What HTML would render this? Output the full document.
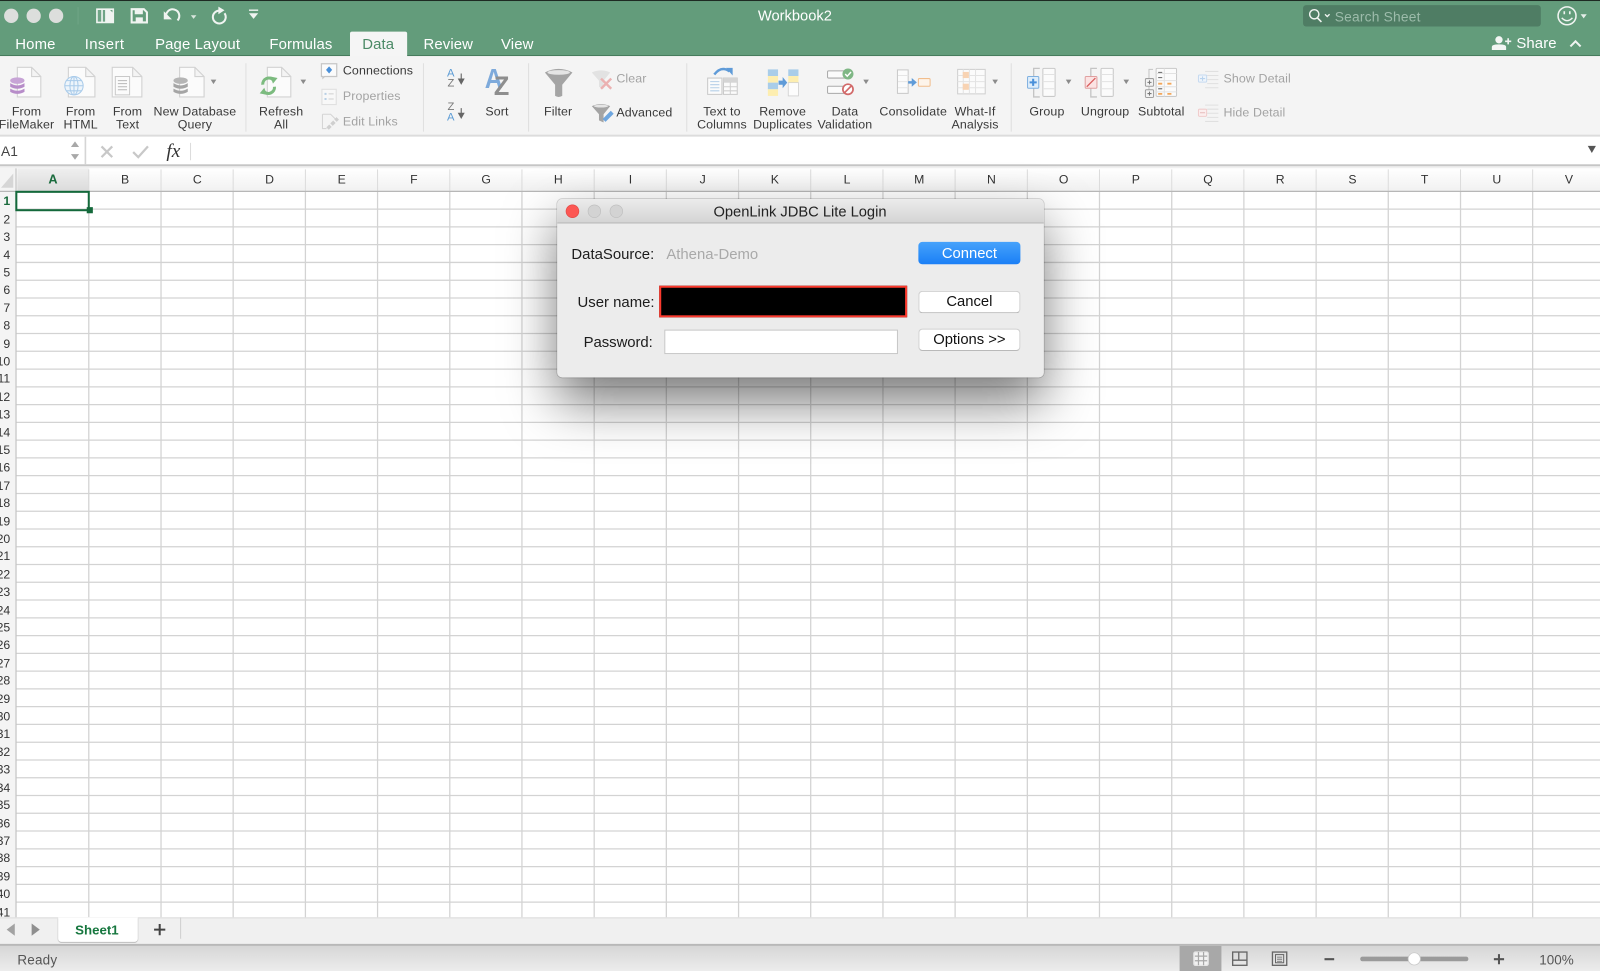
<!DOCTYPE html>
<html><head><meta charset="utf-8"><title>Workbook2</title>
<style>
html,body{margin:0;padding:0;width:1600px;height:971px;overflow:hidden;background:#fff}
#s{position:absolute;left:0;top:0;width:1568px;height:952px;transform:scale(1.020408);transform-origin:0 0;overflow:hidden;font-family:"Liberation Sans",sans-serif;color:#333;filter:blur(.3px)}
.b{position:absolute}
.t{position:absolute;white-space:nowrap}
.c{transform:translateX(-50%);text-align:center}
.r{font-size:12.15px;line-height:13px;letter-spacing:.12px;color:#3a3a3a}
.g{color:#a3a3a3}
.tab{font-size:14.6px;color:#fff;top:35px;line-height:18px;letter-spacing:.12px}
#hdr{position:absolute;left:16.5px;top:164px;height:24px;display:flex;font-size:12px;line-height:25px;color:#333}
#hdr div{width:70.75px;text-align:center;flex:none}
#rows{position:absolute;left:-10px;top:188.3px;width:20px;text-align:right;font-size:12px;color:#333}
#rows div{height:17.415px;line-height:19px}
svg{position:absolute;left:0;top:0}
.btn{position:absolute;left:900px;width:100px;background:#fff;border:1px solid #d0d0d0;border-bottom-color:#b9b9b9;border-radius:4px;box-sizing:border-box;text-align:center;font-size:14.5px;color:#111}
.lbl{position:absolute;white-space:nowrap;font-size:14.6px;color:#1c1c1c;line-height:18px}
</style></head><body>
<div id="s">
<!-- title / tabs -->
<div class="b" style="left:0;top:0;width:1568px;height:55px;background:#639c7b;border-top:1px solid #1d2a22;box-sizing:border-box;border-bottom:1px solid #44795a"></div>
<div class="b" style="left:1277px;top:5px;width:233px;height:21px;background:#4f7d64;border-radius:3px"></div>
<div class="t" style="left:1308px;top:8.5px;font-size:13.5px;line-height:16px;color:#9dbcab;letter-spacing:.2px">Search Sheet</div>
<div class="t c" style="left:779px;top:8px;font-size:14.4px;line-height:17px;color:#fff">Workbook2</div>
<div class="b" style="left:343px;top:31px;width:56px;height:25px;background:#f5f5f5;border-radius:2px 2px 0 0"></div>
<div class="t tab" style="left:15px">Home</div>
<div class="t tab" style="left:83px;letter-spacing:.4px">Insert</div>
<div class="t tab" style="left:152px">Page Layout</div>
<div class="t tab" style="left:264px">Formulas</div>
<div class="t tab" style="left:355px;color:#4b8a66">Data</div>
<div class="t tab" style="left:415px">Review</div>
<div class="t tab" style="left:491px">View</div>
<div class="t tab" style="left:1486px;top:34px">Share</div>
<!-- ribbon -->
<div class="b" style="left:0;top:55px;width:1568px;height:77px;background:#f4f4f4;border-bottom:2px solid #dcdcdc"></div>
<!-- formula bar -->
<div class="b" style="left:0;top:134px;width:1568px;height:27px;background:#fff;border-bottom:2px solid #c6c6c6"></div>
<div class="b" style="left:0;top:163px;width:1568px;height:2px;background:#f0f0f0"></div>
<div class="t" style="left:1px;top:141px;font-size:13.5px;line-height:16px;color:#444">A1</div>
<div class="t" style="left:163px;top:139px;font-family:'Liberation Serif',serif;font-style:italic;font-size:19px;line-height:20px;color:#333">fx</div>

<div class="t r c" style="left:26px;top:103px">From<br>FileMaker</div>
<div class="t r c" style="left:79px;top:103px">From<br>HTML</div>
<div class="t r c" style="left:125px;top:103px">From<br>Text</div>
<div class="t r c" style="left:191px;top:103px">New Database<br>Query</div>
<div class="t r c" style="left:275.5px;top:103px">Refresh<br>All</div>
<div class="t r" style="left:336px;top:63px">Connections</div>
<div class="t r g" style="left:336px;top:88px">Properties</div>
<div class="t r g" style="left:336px;top:113px">Edit Links</div>
<div class="t r c" style="left:487px;top:103px">Sort</div>
<div class="t r c" style="left:547px;top:103px">Filter</div>
<div class="t r g" style="left:604px;top:71px">Clear</div>
<div class="t r" style="left:604px;top:104px">Advanced</div>
<div class="t r c" style="left:707.5px;top:103px">Text to<br>Columns</div>
<div class="t r c" style="left:767px;top:103px">Remove<br>Duplicates</div>
<div class="t r c" style="left:828px;top:103px">Data<br>Validation</div>
<div class="t r c" style="left:895px;top:103px;letter-spacing:.2px">Consolidate</div>
<div class="t r c" style="left:955.5px;top:103px">What-If<br>Analysis</div>
<div class="t r c" style="left:1026px;top:103px">Group</div>
<div class="t r c" style="left:1083px;top:103px">Ungroup</div>
<div class="t r c" style="left:1138px;top:103px">Subtotal</div>
<div class="t r g" style="left:1199px;top:71px">Show Detail</div>
<div class="t r g" style="left:1199px;top:104px">Hide Detail</div>
<!-- Sort letters -->
<div class="t" style="left:438px;top:66px;font-size:11px;line-height:12px;color:#5b9bd5">A</div>
<div class="t" style="left:438.5px;top:76px;font-size:11px;line-height:12px;color:#777">Z</div>
<div class="t" style="left:438.5px;top:99px;font-size:11px;line-height:12px;color:#777">Z</div>
<div class="t" style="left:438px;top:109px;font-size:11px;line-height:12px;color:#5b9bd5">A</div>
<div class="t" style="left:474.5px;top:61px;font-size:27px;line-height:32px;color:#7eaadb;font-weight:bold;transform:scaleX(.9);transform-origin:0 0">A</div>
<div class="t" style="left:484px;top:69px;font-size:26px;line-height:31px;color:#8e8e8e;font-weight:bold;transform:scaleX(.95);transform-origin:0 0">Z</div>

<!-- sheet grid -->
<div class="b" style="left:16px;top:165px;width:1552px;height:23px;background:linear-gradient(#fff,#f0f0f0)"></div>
<div class="b" style="left:0;top:165px;width:16px;height:734px;background:#f4f4f4"></div>
<div class="b" style="left:16.5px;top:165px;width:70.5px;height:22.5px;background:linear-gradient(#efefef,#dadada)"></div>
<svg width="1568" height="952" viewBox="0 0 1568 952">
<path d="M13 170V184H1Z" fill="#d6d6d6"/>
<g stroke="#d3d3d3" stroke-width="1.25" fill="none">
<path d="M16 204.9H1568M16 222.3H1568M16 239.7H1568M16 257.2H1568M16 274.6H1568M16 292H1568M16 309.4H1568M16 326.8H1568M16 344.2H1568M16 361.7H1568M16 379.1H1568M16 396.5H1568M16 413.9H1568M16 431.3H1568M16 448.7H1568M16 466.1H1568M16 483.6H1568M16 501H1568M16 518.4H1568M16 535.8H1568M16 553.2H1568M16 570.6H1568M16 588H1568M16 605.5H1568M16 622.9H1568M16 640.3H1568M16 657.7H1568M16 675.1H1568M16 692.5H1568M16 709.9H1568M16 727.4H1568M16 744.8H1568M16 762.2H1568M16 779.6H1568M16 797H1568M16 814.4H1568M16 831.9H1568M16 849.3H1568M16 866.7H1568M16 884.1H1568"/>
<path d="M87 187V899M157.8 187V899M228.5 187V899M299.3 187V899M370 187V899M440.8 187V899M511.5 187V899M582.3 187V899M653 187V899M723.8 187V899M794.5 187V899M865.3 187V899M936 187V899M1006.8 187V899M1077.5 187V899M1148.3 187V899M1219 187V899M1289.8 187V899M1360.5 187V899M1431.3 187V899M1502 187V899"/>
</g>
<path d="M87 166V187M157.8 166V187M228.5 166V187M299.3 166V187M370 166V187M440.8 166V187M511.5 166V187M582.3 166V187M653 166V187M723.8 166V187M794.5 166V187M865.3 166V187M936 166V187M1006.8 166V187M1077.5 166V187M1148.3 166V187M1219 166V187M1289.8 166V187M1360.5 166V187M1431.3 166V187M1502 166V187" stroke="#dcdcdc"/>
<path d="M0 187.5H1568" stroke="#b7b7b7" stroke-width="1.2"/>
<path d="M15.7 165V899" stroke="#c4c4c4" stroke-width="1.2"/>
</svg>
<div id="hdr"><div style="font-weight:bold;color:#1a6b3d;font-size:12.5px">A</div><div>B</div><div>C</div><div>D</div><div>E</div><div>F</div><div>G</div><div>H</div><div>I</div><div>J</div><div>K</div><div>L</div><div>M</div><div>N</div><div>O</div><div>P</div><div>Q</div><div>R</div><div>S</div><div>T</div><div>U</div><div>V</div></div>
<div id="rows"><div style="font-weight:bold;color:#1a6b3d">1</div><div>2</div><div>3</div><div>4</div><div>5</div><div>6</div><div>7</div><div>8</div><div>9</div><div>10</div><div>11</div><div>12</div><div>13</div><div>14</div><div>15</div><div>16</div><div>17</div><div>18</div><div>19</div><div>20</div><div>21</div><div>22</div><div>23</div><div>24</div><div>25</div><div>26</div><div>27</div><div>28</div><div>29</div><div>30</div><div>31</div><div>32</div><div>33</div><div>34</div><div>35</div><div>36</div><div>37</div><div>38</div><div>39</div><div>40</div><div>41</div></div>
<div class="b" style="left:15px;top:187px;width:73px;height:20px;border:2px solid #14693b;box-sizing:border-box"></div>
<div class="b" style="left:84.5px;top:203px;width:6px;height:6px;background:#14693b"></div>

<!-- bottom -->
<div class="b" style="left:0;top:899px;width:1568px;height:27px;background:#f0f0f0;border-top:1px solid #dcdcdc;box-sizing:border-box"></div>
<div class="b" style="left:57px;top:899px;width:78px;height:24px;background:#fff;border-radius:0 0 3px 3px;box-shadow:0 1px 0 #bdbdbd,-1px 0 0 #e0e0e0,1px 0 0 #e0e0e0"></div>
<div class="t c" style="left:95px;top:904px;font-size:13px;line-height:16px;font-weight:bold;color:#17773f">Sheet1</div>
<div class="b" style="left:0;top:925px;width:1568px;height:27px;background:linear-gradient(#d6d6d6,#ededed);border-top:2px solid #b8b8b8;box-sizing:border-box"></div>
<div class="t" style="left:17px;top:932.5px;font-size:13.2px;line-height:16px;color:#555;letter-spacing:.2px">Ready</div>
<div class="b" style="left:1156px;top:927px;width:41px;height:25px;background:#a8a8a8"></div>
<div class="t" style="left:1508.5px;top:932.5px;font-size:13.2px;line-height:16px;color:#555">100%</div>

<!-- icons -->
<svg width="1568" height="952" viewBox="0 0 1568 952">
<!-- traffic -->
<circle cx="11" cy="15.5" r="7" fill="#dcdedc"/><circle cx="33" cy="15.5" r="7" fill="#dcdedc"/><circle cx="55" cy="15.5" r="7" fill="#dcdedc"/>
<path d="M76.5 7V24" stroke="#6fa586"/>
<!-- QAT -->
<g fill="none" stroke="#f0f4f1" stroke-width="1.6">
<path d="M95 9H111V22H95ZM100 9V22" fill="#6fa486"/>
<path d="M103 9H107L111 13V22H103Z" fill="#f0f4f1" stroke="none"/>
<path d="M129 9H141L144 12V22H129Z" stroke-width="2"/><path d="M132 9H140V14H132Z" fill="#f0f4f1" stroke="none"/><path d="M133 17H140V22H133Z" fill="#f0f4f1" stroke="none"/>
<path d="M163 17.5A6.5 6.5 0 1 1 174 20" stroke-width="2"/><path d="M160.5 11V19H168.5Z" fill="#f0f4f1" stroke="none"/>
<path d="M187 15H192.5L189.7 18.5Z" fill="#d9e6de" stroke="none"/>
<path d="M216 10.5A6.3 6.3 0 1 0 220 13" stroke-width="2"/><path d="M214 6.5V14L220 10Z" fill="#f0f4f1" stroke="none"/>
<path d="M244 10H253" stroke-width="1.3"/><path d="M244 13H253L248.5 18.5Z" fill="#f0f4f1" stroke="none"/>
<!-- search -->
<circle cx="1288" cy="14" r="4.5" stroke-width="1.4"/><path d="M1291 17.5L1295 21.5" stroke-width="1.6"/>
<path d="M1298.5 14L1300.7 16.2L1303 14" stroke-width="1.3"/>
<!-- smiley -->
<circle cx="1535.7" cy="15.5" r="8.8" stroke-width="1.5"/><path d="M1530.5 17.5Q1535.7 23 1541 17.5" stroke-width="1.4"/>
<path d="M1533 11V14M1538.4 11V14" stroke-width="1.6"/>
<path d="M1549 14H1555L1552 18Z" fill="#e6eee9" stroke="none"/>
<!-- share -->
<circle cx="1469" cy="39" r="3.6" fill="#f3f6f4" stroke="none"/><path d="M1462 49V46Q1462 43.5 1469 43.5Q1476 43.5 1476 46V49Z" fill="#f3f6f4" stroke="none"/>
<path d="M1475 40.5H1481M1478 37.5V43.5" stroke-width="1.6"/>
<path d="M1539 45.5L1544 40.5L1549 45.5" stroke-width="2"/>
</g>
<!-- separators -->
<path d="M241 62V129M415 62V129M518 62V129M673 62V129M991 62V129" stroke="#dfdfdf"/>
<!-- docs -->
<g fill="#fbfbfb" stroke="#d2d2d2" stroke-width="1.1">
<path d="M17 66H31L40 75V95H17ZM31 66V75H40"/>
<path d="M67 66H84L93 75V95H67ZM84 66V75H93"/>
<path d="M110 66H130L139 75V95H110ZM130 66V75H139"/>
<path d="M176 66H191L200 75V95H176ZM191 66V75H200"/>
<path d="M262 66H276L285 75V95H262ZM276 66V75H285"/>
</g>
<!-- db purple -->
<g fill="#b78dc9"><ellipse cx="17" cy="79" rx="7" ry="3.2" fill="#c7a4d6"/><path d="M10 81.5Q17 86 24 81.5V85Q17 89 10 85Z"/><path d="M10 86.8Q17 91 24 86.8V90Q17 94 10 90Z"/></g>
<!-- db gray -->
<g fill="#a5a5a5"><ellipse cx="177" cy="79" rx="7" ry="3.2" fill="#b5b5b5"/><path d="M170 81.5Q177 86 184 81.5V85Q177 89 170 85Z"/><path d="M170 86.8Q177 91 184 86.8V90Q177 94 170 90Z"/></g>
<!-- globe -->
<g fill="#eef5fb" stroke="#a9cbea" stroke-width="1"><circle cx="72.5" cy="84" r="9"/><ellipse cx="72.5" cy="84" rx="4" ry="9"/><path d="M63.5 84H81.5M65 79H80M65 89H80M72.5 75V93" fill="none"/></g>
<!-- text doc -->
<g fill="#fbfbfb" stroke="#c9c9c9"><path d="M113 75H127V93H113Z"/><path d="M115.5 79H124.5M115.5 82H124.5M115.5 85H124.5M115.5 88H124.5" stroke="#b8b8b8"/></g>
<!-- carets -->
<g fill="#8b8b8b"><path d="M206.5 78H212L209.2 82.5Z"/><path d="M294.5 78H300L297.2 82.5Z"/><path d="M846 78H851.5L848.7 82.5Z"/><path d="M972.5 78H978L975.2 82.5Z"/><path d="M1044.5 78H1050L1047.2 82.5Z"/><path d="M1101 78H1106.5L1103.7 82.5Z"/><path d="M1556 143H1564L1560 150Z" fill="#555"/></g>
<!-- refresh -->
<g fill="none" stroke="#7cbb7f" stroke-width="3"><path d="M257.5 83A6 6 0 0 1 268 78.5"/><path d="M269 85A6 6 0 0 1 258.5 89.5"/></g>
<path d="M265 75L272 76.5L267.5 82ZM261.5 93L254.5 91.5L259 86Z" fill="#7cbb7f"/>
<!-- connections -->
<path d="M315 62.5H330V75H318L316.5 76.5V75H315Z" fill="#fbfbfb" stroke="#c6c6c6" stroke-width="1.2"/><path d="M322.5 65L325.5 68.5L322.5 72L319.5 68.5Z" fill="#4a90d9"/>
<!-- properties -->
<rect x="315.5" y="87.5" width="14" height="15" fill="#f8f8f8" stroke="#dedede"/><path d="M318 92H320M318 97H320" stroke="#b8cfe4" stroke-width="2"/><path d="M322 92H327M322 97H327" stroke="#cfcfcf"/>
<!-- edit links -->
<path d="M316 112H324L329 117V118M316 112V126H320" fill="none" stroke="#d4d4d4"/><path d="M321 126L331 116" stroke="#cfcfcf" stroke-width="3.4" stroke-dasharray="4 1.5" fill="none"/>
<!-- sort arrows -->
<path d="M452 72V79M449.5 77.5H454.5L452 82Z" fill="#666" stroke="#666" stroke-width="1.1"/>
<path d="M452 106V112M449.5 111H454.5L452 115.5Z" fill="#666" stroke="#666" stroke-width="1.1"/>
<!-- filter -->
<path d="M534 71Q547.5 64 561 71L551 83V94Q547.5 96 544 94V83Z" fill="#a4a4a4"/><ellipse cx="547.5" cy="71" rx="11" ry="2.3" fill="#e5e5e5"/>
<path d="M580 71Q589 67 598 71L591.5 79V87L587 85V79Z" fill="#e2e2e2"/><path d="M589 77L599 87M599 77L589 87" stroke="#ebb1b1" stroke-width="2.4"/>
<path d="M580 104Q589 100 598 104L591.5 112V120L587 118V112Z" fill="#a4a4a4"/><ellipse cx="589" cy="104" rx="7" ry="1.4" fill="#e5e5e5"/><path d="M592 118L600 110" stroke="#6ea6df" stroke-width="4"/>
<!-- text to columns -->
<path d="M700 73Q707 64 715 70" fill="none" stroke="#5f9bd8" stroke-width="2.4"/><path d="M711.5 66.5L718 66.5V74Z" fill="#5f9bd8"/>
<rect x="693.5" y="76.5" width="14" height="16" fill="#fbfbfb" stroke="#c9c9c9"/><path d="M696 80H705M696 83H705M696 86H705M696 89H705" stroke="#b5cfe8"/>
<rect x="709" y="76.5" width="13.5" height="16" fill="#fbfbfb" stroke="#c9c9c9"/><path d="M709 80.5H722.5M709 85H722.5M709 89H722.5M715.7 80V92.5" stroke="#cfcfcf"/>
<path d="M709 76.5H722.5V80.5H709Z" fill="#d5d5d5"/>
<!-- remove duplicates -->
<rect x="752.5" y="68" width="10" height="6.5" fill="#a9cde9"/><rect x="752.5" y="74.5" width="10" height="6.5" fill="#fdeeb0"/><rect x="752.5" y="81" width="10" height="6.5" fill="#a9cde9"/><rect x="752.5" y="87.5" width="10" height="6.5" fill="#fdeeb0"/>
<rect x="772.5" y="68" width="10" height="6.5" fill="#a9cde9"/><rect x="772.5" y="74.5" width="10" height="6.5" fill="#fdeeb0"/><rect x="772.5" y="81" width="10" height="13" fill="#fcfcfc" stroke="#d0d0d0" stroke-width=".8"/>
<path d="M763 79H767V75.5L771.5 81L767 86.5V83H763Z" fill="#5f9bd8"/>
<!-- data validation -->
<rect x="811" y="69.5" width="21" height="7" rx="1" fill="#fbfbfb" stroke="#a9a9a9"/><rect x="811" y="84.5" width="21" height="7" rx="1" fill="#fbfbfb" stroke="#a9a9a9"/>
<circle cx="831" cy="72.5" r="5.4" fill="#7fb785"/><path d="M828.3 72.5L830.3 74.7L834 70.6" stroke="#fff" stroke-width="1.4" fill="none"/>
<circle cx="831" cy="87.5" r="5" fill="#fff" stroke="#d26a6a" stroke-width="1.7"/><path d="M827.8 90.7L834.2 84.3" stroke="#d26a6a" stroke-width="1.7"/>
<!-- consolidate -->
<rect x="879.5" y="68.5" width="10.5" height="23" fill="#fbfbfb" stroke="#c9c9c9"/><path d="M880 74H890M880 80H890M880 86H890" stroke="#e5e5e5"/>
<path d="M890 79.5H893.5V76.5L898.5 80.7L893.5 85V82H890Z" fill="#5f9bd8"/>
<rect x="900" y="77" width="11.5" height="7.5" rx="1" fill="#fdf4ea" stroke="#f1bd8c"/>
<!-- what-if -->
<rect x="938.5" y="68" width="27" height="24" fill="#fbfbfb" stroke="#cfcfcf"/><path d="M938.5 74H965M938.5 80H965M938.5 86H965M944 68V92M950 68V92M956 68V92" stroke="#e3e3e3"/>
<rect x="943.5" y="70.5" width="6" height="6" fill="#f8d3b3"/><rect x="943.5" y="82" width="6" height="6" fill="#f8d3b3"/>
<!-- group -->
<path d="M1019 67H1013V95H1019" fill="none" stroke="#c4c4c4" stroke-width="1.3"/><rect x="1022" y="67" width="12" height="27.5" rx="1" fill="#fbfbfb" stroke="#c9c9c9"/><path d="M1022 73H1034M1022 80H1034M1022 87H1034" stroke="#e2e2e2"/>
<rect x="1007" y="75" width="11" height="11.5" rx="1" fill="#dfeefb" stroke="#7fb0e0"/><path d="M1009 80.7H1016M1012.5 77.2V84.2" stroke="#4a90d9" stroke-width="2"/>
<!-- ungroup -->
<path d="M1075 67H1069V95H1075" fill="none" stroke="#c4c4c4" stroke-width="1.3"/><rect x="1079" y="67" width="12" height="27.5" rx="1" fill="#fbfbfb" stroke="#c9c9c9"/><path d="M1079 73H1091M1079 80H1091M1079 87H1091" stroke="#e2e2e2"/>
<rect x="1063.5" y="75" width="11.5" height="11.5" rx="1" fill="#fbe3e3" stroke="#e0a0a0"/><path d="M1065 85L1073.5 76.5" stroke="#d95f5f" stroke-width="1.3"/>
<!-- subtotal -->
<path d="M1130 68H1126V77M1126 84V88" fill="none" stroke="#c4c4c4"/><rect x="1122.5" y="77" width="8" height="7.5" rx="1" fill="#f2f2f2" stroke="#9f9f9f"/><rect x="1122.5" y="88" width="8" height="7.5" rx="1" fill="#f2f2f2" stroke="#9f9f9f"/><path d="M1124.5 80.7H1128.5M1126.5 78.8V82.7M1124.5 91.7H1128.5M1126.5 89.8V93.7" stroke="#777"/>
<rect x="1133" y="67" width="20" height="27.5" rx="1" fill="#fbfbfb" stroke="#c9c9c9"/><path d="M1133 72H1153M1133 79H1153M1133 85H1153M1133 90H1153M1141 67V94.5" stroke="#e2e2e2"/><path d="M1135 71H1139M1135 76H1139M1135 87H1139" stroke="#777" stroke-width="1.2"/><path d="M1135 82H1139M1144 82H1148M1135 92H1139M1144 92H1148" stroke="#f2a65a" stroke-width="1.8"/>
<!-- show detail / hide detail -->
<path d="M1181 70H1194M1183 74H1194M1183 78H1194M1183 82H1194M1181 86H1194" stroke="#e0e0e0"/><rect x="1174.5" y="73.5" width="8" height="7" rx="1" fill="#eef4fb" stroke="#c6daf0"/><path d="M1176 77H1181M1178.5 74.8V79.2" stroke="#b9d3ee"/>
<path d="M1181 103H1194M1183 107H1194M1183 111H1194M1183 115H1194M1181 119H1194" stroke="#e0e0e0"/><rect x="1174.5" y="107" width="8" height="7" rx="1" fill="#fbeeee" stroke="#f0cccc"/><path d="M1176 110.5H1181" stroke="#e8baba"/>
<!-- formula bar -->
<path d="M69.5 144L73.5 138.5L77.5 144ZM69.5 151L73.5 156.5L77.5 151Z" fill="#a8a8a8"/>
<path d="M83.7 134V161" stroke="#d5d5d5" stroke-width="1.6"/>
<path d="M99.5 143.5L110 154M110 143.5L99.5 154" stroke="#c8c8c8" stroke-width="2.2"/>
<path d="M130.5 149L135.5 154L145 143.5" stroke="#c8c8c8" stroke-width="2.2" fill="none"/>
<path d="M186.7 140V157" stroke="#dcdcdc"/>
<!-- sheet nav -->
<path d="M14.5 905V917L6.5 911Z" fill="#a2a2a2"/><path d="M31 905V917L39 911Z" fill="#8f8f8f"/>
<path d="M151 911H162M156.5 905.5V916.5" stroke="#444" stroke-width="2"/>
<path d="M177 899V920" stroke="#cfcfcf"/>
<!-- status -->
<g fill="none" stroke-width="1.3">
<rect x="1170" y="933" width="14" height="13" rx="1.5" fill="#f2f2f2" stroke="#e5e5e5"/><path d="M1171 937H1183M1171 941.5H1183M1174.5 933V946M1179.5 933V946" stroke="#a8a8a8" stroke-width="1.2"/>
<rect x="1208" y="933" width="14" height="13" stroke="#666"/><path d="M1208 941H1222M1214 933V941" stroke="#666"/>
<rect x="1247" y="933" width="14" height="13" stroke="#666"/><rect x="1250" y="935.5" width="8" height="8" stroke="#666" stroke-width="1"/><path d="M1251.5 938H1256.5M1251.5 940H1256.5M1251.5 942H1256.5" stroke="#666" stroke-width=".8"/>
<path d="M1298 940H1307.5" stroke="#555" stroke-width="2"/><path d="M1464 940H1474M1469 935V945" stroke="#555" stroke-width="2"/>
</g>
<rect x="1333" y="937.5" width="106" height="4.5" rx="2.2" fill="#9a9a9a"/>
<circle cx="1386" cy="939.7" r="6" fill="#fff" stroke="#c9c9c9" stroke-width=".8"/>
</svg>

<!-- dialog -->
<div class="b" style="left:545.5px;top:194.5px;width:477px;height:175.5px;background:#ececec;border-radius:5px;box-shadow:0 24px 50px rgba(0,0,0,.52),0 0 0 .7px rgba(0,0,0,.18);overflow:hidden">
 <div style="height:23.5px;background:linear-gradient(#ebebeb,#d4d4d4);border-bottom:1px solid #b5b5b5"></div>
</div>
<svg width="1568" height="952" viewBox="0 0 1568 952">
<circle cx="561" cy="207" r="6.3" fill="#fc5753" stroke="#df4744" stroke-width=".6"/><circle cx="582.5" cy="207" r="6.2" fill="#d3d3d3" stroke="#bdbdbd" stroke-width=".6"/><circle cx="604" cy="207" r="6.2" fill="#d3d3d3" stroke="#bdbdbd" stroke-width=".6"/>
</svg>
<div class="t c" style="left:784px;top:198.5px;font-size:14.4px;line-height:18px;color:#222">OpenLink JDBC Lite Login</div>
<div class="lbl" style="left:560px;top:240.8px">DataSource:</div>
<div class="lbl" style="left:653px;top:240.8px;color:#a9a9a9">Athena-Demo</div>
<div class="lbl" style="left:566px;top:287.5px">User name:</div>
<div class="lbl" style="left:572px;top:327.3px;letter-spacing:-.05px">Password:</div>
<div class="b" style="left:646px;top:279.5px;width:243px;height:31px;background:#000;border:2.5px solid #fb3a2e;box-sizing:border-box"></div>
<div class="b" style="left:650.5px;top:322.5px;width:229px;height:24px;background:#fff;border:1px solid #c6c6c6;box-sizing:border-box"></div>
<div class="btn" style="top:236.8px;height:22.5px;line-height:24px;background:linear-gradient(#46a2fb,#1a7ff6);border:none;color:#fff">Connect</div>
<div class="btn" style="top:284.8px;height:22px;line-height:21.5px">Cancel</div>
<div class="btn" style="top:321.8px;height:22px;line-height:21.5px">Options &gt;&gt;</div>
</div>
</body></html>
